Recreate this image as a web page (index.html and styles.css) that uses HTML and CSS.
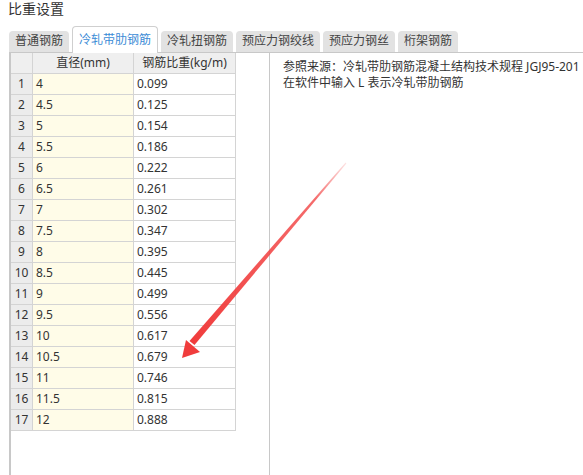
FILE: index.html
```html
<!DOCTYPE html>
<html lang="zh">
<head>
<meta charset="utf-8">
<title>比重设置</title>
<link rel="stylesheet" href="styles.css">
</head>
<body>
<div class="title">比重设置</div>
<div class="tabs">
  <div class="tab">普通钢筋</div>
  <div class="tab active">冷轧带肋钢筋</div>
  <div class="tab">冷轧扭钢筋</div>
  <div class="tab">预应力钢绞线</div>
  <div class="tab">预应力钢丝</div>
  <div class="tab">桁架钢筋</div>
</div>
<div class="content">
  <div class="left">
    <div class="grid">
      <div class="row head"><div class="c num"></div><div class="c h">直径(mm)</div><div class="c h">钢筋比重(kg/m)</div></div>
      <div class="row"><div class="c num">1</div><div class="c d">4</div><div class="c w">0.099</div></div>
      <div class="row"><div class="c num">2</div><div class="c d">4.5</div><div class="c w">0.125</div></div>
      <div class="row"><div class="c num">3</div><div class="c d">5</div><div class="c w">0.154</div></div>
      <div class="row"><div class="c num">4</div><div class="c d">5.5</div><div class="c w">0.186</div></div>
      <div class="row"><div class="c num">5</div><div class="c d">6</div><div class="c w">0.222</div></div>
      <div class="row"><div class="c num">6</div><div class="c d">6.5</div><div class="c w">0.261</div></div>
      <div class="row"><div class="c num">7</div><div class="c d">7</div><div class="c w">0.302</div></div>
      <div class="row"><div class="c num">8</div><div class="c d">7.5</div><div class="c w">0.347</div></div>
      <div class="row"><div class="c num">9</div><div class="c d">8</div><div class="c w">0.395</div></div>
      <div class="row"><div class="c num">10</div><div class="c d">8.5</div><div class="c w">0.445</div></div>
      <div class="row"><div class="c num">11</div><div class="c d">9</div><div class="c w">0.499</div></div>
      <div class="row"><div class="c num">12</div><div class="c d">9.5</div><div class="c w">0.556</div></div>
      <div class="row"><div class="c num">13</div><div class="c d">10</div><div class="c w">0.617</div></div>
      <div class="row"><div class="c num">14</div><div class="c d">10.5</div><div class="c w">0.679</div></div>
      <div class="row"><div class="c num">15</div><div class="c d">11</div><div class="c w">0.746</div></div>
      <div class="row"><div class="c num">16</div><div class="c d">11.5</div><div class="c w">0.815</div></div>
      <div class="row"><div class="c num">17</div><div class="c d">12</div><div class="c w">0.888</div></div>
    </div>
  </div>
  <div class="right">
    <p>参照来源：冷轧带肋钢筋混凝土结构技术规程 JGJ95-201</p>
    <p>在软件中输入 L 表示冷轧带肋钢筋</p>
  </div>
</div>
<svg class="arrow" width="583" height="475" viewBox="0 0 583 475">
  <defs>
    <linearGradient id="g" x1="346" y1="163" x2="192" y2="345" gradientUnits="userSpaceOnUse">
      <stop offset="0" stop-color="#f24646" stop-opacity="0.15"/>
      <stop offset="0.2" stop-color="#f24646" stop-opacity="0.8"/>
      <stop offset="1" stop-color="#f03c3c"/>
    </linearGradient>
  </defs>
  <polygon points="345.6,162.6 346.4,163.4 194.5,345 189.5,341" fill="url(#g)"/>
  <polygon points="182,358 186,340 193,346 200,352" fill="#f03c3c"/>
</svg>
</body>
</html>
```
FILE: styles.css
```css
* { box-sizing: border-box; }
html, body { margin: 0; padding: 0; }
body {
  width: 583px;
  height: 475px;
  overflow: hidden;
  background: #fff;
  color: #333;
  font-family: "Noto Sans", "Noto Sans CJK SC", sans-serif;
  font-size: 12px;
  position: relative;
}
.title {
  font-size: 14px;
  line-height: 18px;
  padding: 0 0 0 8px;
  height: 27px;
  color: #333;
}
.tabs {
  display: flex;
  align-items: flex-end;
  gap: 3px;
  margin-left: 9px;
  height: 26px;
  border-bottom: 1px solid #c8c8c8;
}
.tab {
  height: 21px;
  line-height: 20px;
  padding: 0 6px;
  background: #e2e2e2;
  color: #444;
  border-radius: 4px 4px 0 0;
  white-space: nowrap;
}
.tab.active {
  height: 27px;
  line-height: 25px;
  background: #fff;
  color: #3b8bd6;
  border: 1px solid #cfcfcf;
  border-bottom: none;
  margin-bottom: -1px;
}
.content {
  display: flex;
  height: 422px;
}
.left {
  margin-left: 9px;
  width: 261px;
  border-left: 2px solid #c8c8c8;
  border-right: 1px solid #c8c8c8;
}
.grid { display: flex; flex-direction: column; }
.row {
  display: grid;
  grid-template-columns: 22px 101px 102px;
  height: 21px;
}
.c {
  border-right: 1px solid #d4d4d4;
  border-bottom: 1px solid #d4d4d4;
  line-height: 20px;
  padding-left: 3px;
  white-space: nowrap;
  overflow: hidden;
}
.c.num {
  background: #ececec;
  text-align: center;
  padding: 0;
}
.head .c { background: #efefef; }
.c.h { text-align: center; padding: 0; }
.c.d { background: #fffce8; }
.right {
  flex: 1;
  padding: 6px 0 0 13px;
  white-space: nowrap;
  overflow: hidden;
}
.right p {
  margin: 0;
  line-height: 16px;
}
.arrow {
  position: absolute;
  left: 0;
  top: 0;
  pointer-events: none;
}
```
